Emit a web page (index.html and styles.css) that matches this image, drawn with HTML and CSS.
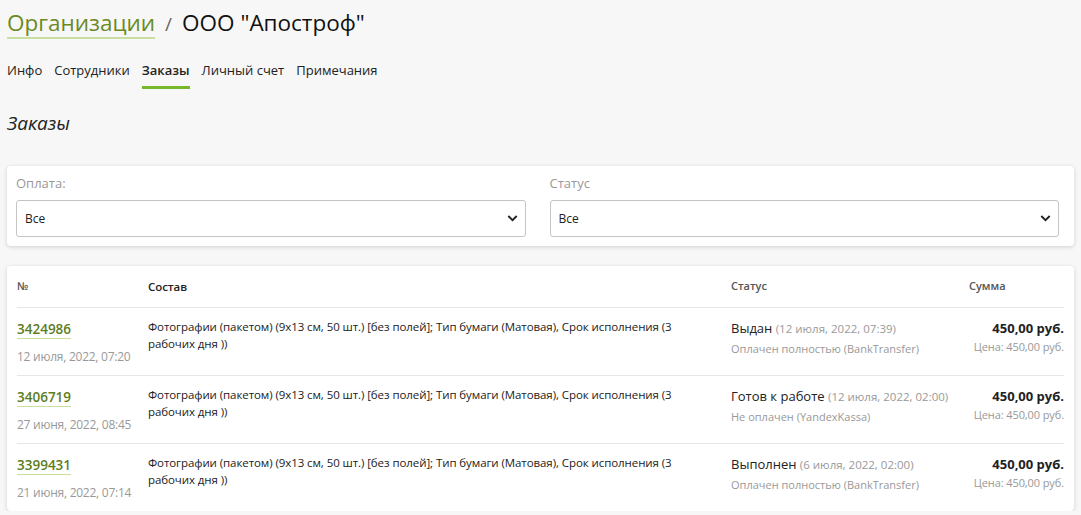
FILE: index.html
```html
<!DOCTYPE html>
<html lang="ru">
<head>
<meta charset="utf-8">
<title>Заказы</title>
<link rel="stylesheet" href="styles.css">
</head>
<body>
<div class="page">
  <h1 class="crumbs"><a class="crumb-link" href="#">Организации</a><span class="sep">/</span><span class="crumb-cur">ООО "Апостроф"</span></h1>
  <nav class="tabs">
    <a class="tab" href="#">Инфо</a>
    <a class="tab" href="#">Сотрудники</a>
    <a class="tab active" href="#">Заказы</a>
    <a class="tab" href="#">Личный счет</a>
    <a class="tab" href="#">Примечания</a>
  </nav>
  <h2 class="section-title">Заказы</h2>
  <div class="card filters">
    <div class="field">
      <div class="label">Оплата:</div>
      <div class="select"><span>Все</span><svg class="chev" viewBox="0 0 12 8" width="11" height="7"><path d="M1.2 1.2 L6 5.8 L10.8 1.2" fill="none" stroke="#222" stroke-width="2.2"/></svg></div>
    </div>
    <div class="field">
      <div class="label">Статус</div>
      <div class="select"><span>Все</span><svg class="chev" viewBox="0 0 12 8" width="11" height="7"><path d="M1.2 1.2 L6 5.8 L10.8 1.2" fill="none" stroke="#222" stroke-width="2.2"/></svg></div>
    </div>
  </div>
  <div class="card orders">
    <div class="row head">
      <div class="c-num">№</div>
      <div class="c-comp">Состав</div>
      <div class="c-status">Статус</div>
      <div class="c-sum">Сумма</div>
    </div>
    <div class="row">
      <div class="c-num"><a class="num" href="#">3424986</a><div class="date">12 июля, 2022, 07:20</div></div>
      <div class="c-comp">Фотографии (пакетом) (9x13 см, 50 шт.) [без полей]; Тип бумаги (Матовая), Срок исполнения (3 рабочих дня ))</div>
      <div class="c-status"><div class="st">Выдан <span class="st-date">(12 июля, 2022, 07:39)</span></div><div class="pay">Оплачен полностью (BankTransfer)</div></div>
      <div class="c-sum"><div class="total">450,00 руб.</div><div class="price">Цена: 450,00 руб.</div></div>
    </div>
    <div class="row">
      <div class="c-num"><a class="num" href="#">3406719</a><div class="date">27 июня, 2022, 08:45</div></div>
      <div class="c-comp">Фотографии (пакетом) (9x13 см, 50 шт.) [без полей]; Тип бумаги (Матовая), Срок исполнения (3 рабочих дня ))</div>
      <div class="c-status"><div class="st">Готов к работе <span class="st-date">(12 июля, 2022, 02:00)</span></div><div class="pay">Не оплачен (YandexKassa)</div></div>
      <div class="c-sum"><div class="total">450,00 руб.</div><div class="price">Цена: 450,00 руб.</div></div>
    </div>
    <div class="row">
      <div class="c-num"><a class="num" href="#">3399431</a><div class="date">21 июня, 2022, 07:14</div></div>
      <div class="c-comp">Фотографии (пакетом) (9x13 см, 50 шт.) [без полей]; Тип бумаги (Матовая), Срок исполнения (3 рабочих дня ))</div>
      <div class="c-status"><div class="st">Выполнен <span class="st-date">(6 июля, 2022, 02:00)</span></div><div class="pay">Оплачен полностью (BankTransfer)</div></div>
      <div class="c-sum"><div class="total">450,00 руб.</div><div class="price">Цена: 450,00 руб.</div></div>
    </div>
  </div>
</div>
</body>
</html>
```
FILE: styles.css
```css
* { box-sizing: border-box; }
html, body { margin: 0; padding: 0; }
body {
  background: #f7f7f7;
  font-family: "Open Sans", "Noto Sans", sans-serif;
  color: #222;
}
a { text-decoration: none; }
.page { padding: 0 7px; }

.crumbs {
  margin: 0;
  padding-top: 7px;
  font-size: 22.5px;
  font-weight: 400;
  line-height: 32px;
  display: flex;
  align-items: baseline;
}
.crumb-link {
  color: #6b8a24;
  border-bottom: 2px solid #c8df9f;
  line-height: 28px;
}
.sep { color: #666; margin: 0 10px; font-size: 19px; }
.crumb-cur { color: #111; }

.tabs {
  display: flex;
  gap: 12px;
  margin-top: 18px;
  height: 31px;
}
.tab {
  color: #222;
  font-size: 13px;
  line-height: 16px;
  padding-top: 4px;
  border-bottom: 3px solid transparent;
  height: 31px;
}
.tab.active { font-weight: 600; border-bottom-color: #76b82a; }

.section-title {
  margin: 22px 0 0;
  font-size: 19px;
  font-weight: 400;
  font-style: italic;
  line-height: 24px;
  color: #222;
}

.card {
  background: #fff;
  border-radius: 4px;
  box-shadow: 0 1px 4px rgba(0,0,0,0.16);
}
.filters {
  margin-top: 31px;
  height: 80px;
  display: grid;
  grid-template-columns: 1fr 1fr;
  gap: 24px;
  padding: 8px 15px 0 9px;
}
.label {
  font-size: 13px;
  color: #999;
  line-height: 18px;
}
.select {
  margin-top: 8px;
  height: 37px;
  border: 1px solid #c4c4c4;
  border-radius: 3px;
  display: flex;
  align-items: center;
  justify-content: space-between;
  padding: 0 7px 0 8px;
  font-size: 12px;
  color: #222;
}
.chev { display: block; }

.orders {
  margin-top: 20px;
  padding: 0 10px;
}
.row {
  display: grid;
  grid-template-columns: 131px 583px 238px 1fr;
  border-top: 1px solid #e6e6e6;
  height: 68px;
  padding-top: 12px;
}
.row.head {
  border-top: none;
  height: 41px;
  padding-top: 12px;
  font-size: 11px;
  font-weight: 600;
  color: #555;
}
.row.head .c-sum { text-align: left; }
.row.head .c-num, .row.head .c-comp { margin-top: 0; }
.c-num { margin-top: -3px; }
.num {
  color: #5e7d1e;
  font-size: 13.5px;
  font-weight: 600;
  line-height: 18px;
  display: inline-block;
  border-bottom: 1px solid #c8df9f;
}
.date {
  margin-top: 9px;
  font-size: 12px;
  color: #999;
  letter-spacing: -0.25px;
}
.c-comp {
  font-size: 11.5px;
  line-height: 17px;
  color: #222;
  padding-right: 50px;
  margin-top: -2px;
  letter-spacing: -0.08px;
}
.st {
  font-size: 13px;
  color: #222;
  line-height: 18px;
  margin-top: -1px;
}
.st-date { font-size: 11.5px; color: #999; }
.pay { font-size: 11px; color: #999; margin-top: 3px; }
.c-sum { text-align: right; white-space: nowrap; }
.total { font-size: 13px; font-weight: 700; color: #222; line-height: 18px; margin-top: -1px; }
.price { font-size: 11px; color: #999; margin-top: 2px; letter-spacing: -0.1px; }
```
